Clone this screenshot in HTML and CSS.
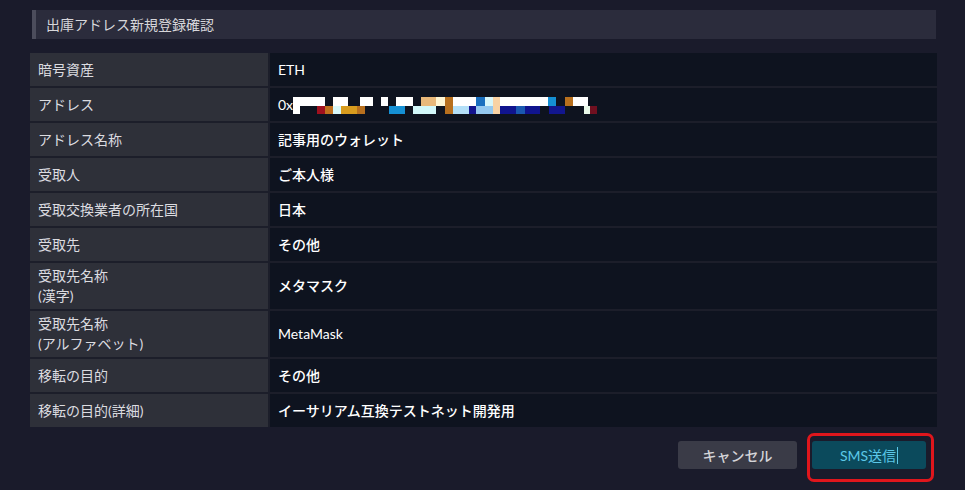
FILE: index.html
```html
<!DOCTYPE html>
<html lang="ja">
<head>
<meta charset="utf-8">
<title>出庫アドレス新規登録確認</title>
<link rel="stylesheet" href="styles.css">
</head>
<body>
<div class="page">
  <div class="title-bar">出庫アドレス新規登録確認</div>
  <div class="info-table">
    <div class="label">暗号資産</div>
    <div class="value">ETH</div>

    <div class="label">アドレス</div>
    <div class="value"><span>0x</span><svg class="mosaic" width="305" height="17" viewBox="0 0 305 17">
      <g>
        <rect x="0" y="0" width="32" height="9" fill="#ffffff"/>
        <rect x="40" y="0" width="15" height="9" fill="#ffffff"/>
        <rect x="67" y="0" width="13" height="9" fill="#ffffff"/>
        <rect x="88" y="0" width="7" height="9" fill="#ffffff"/>
        <rect x="103" y="0" width="17" height="9" fill="#ffffff"/>
        <rect x="128" y="0" width="15" height="9" fill="#e8b87a"/>
        <rect x="143" y="0" width="9" height="9" fill="#fff6d4"/>
        <rect x="152" y="0" width="8" height="17" fill="#b8701e"/>
        <rect x="160" y="0" width="23" height="9" fill="#ffffff"/>
        <rect x="183" y="0" width="9" height="9" fill="#1a6fbf"/>
        <rect x="192" y="0" width="8" height="9" fill="#d8f6fa"/>
        <rect x="200" y="0" width="7" height="17" fill="#f9d2a4"/>
        <rect x="207" y="0" width="48" height="9" fill="#ffffff"/>
        <rect x="255" y="0" width="8" height="9" fill="#1590d4"/>
        <rect x="272" y="0" width="8" height="9" fill="#b8701e"/>
        <rect x="280" y="0" width="15" height="9" fill="#ffffff"/>
      </g>
      <g>
        <rect x="0" y="9" width="7" height="8" fill="#ffffff"/>
        <rect x="24" y="9" width="8" height="8" fill="#a0101e"/>
        <rect x="32" y="9" width="8" height="8" fill="#c0701e"/>
        <rect x="40" y="9" width="8" height="8" fill="#d8f8fa"/>
        <rect x="48" y="9" width="16" height="8" fill="#d89c1e"/>
        <rect x="64" y="9" width="8" height="8" fill="#b8701e"/>
        <rect x="96" y="9" width="16" height="8" fill="#1590d4"/>
        <rect x="120" y="9" width="23" height="8" fill="#d2f8fa"/>
        <rect x="160" y="9" width="16" height="8" fill="#b4e0f8"/>
        <rect x="176" y="9" width="7" height="8" fill="#14148e"/>
        <rect x="183" y="9" width="17" height="8" fill="#94c8f0"/>
        <rect x="207" y="9" width="16" height="8" fill="#10148e"/>
        <rect x="223" y="9" width="9" height="8" fill="#1a58b0"/>
        <rect x="232" y="9" width="15" height="8" fill="#10148e"/>
        <rect x="256" y="9" width="16" height="8" fill="#12168e"/>
        <rect x="291" y="9" width="6" height="8" fill="#e8f8e8"/>
        <rect x="297" y="9" width="7" height="8" fill="#701020"/>
      </g>
    </svg></div>

    <div class="label">アドレス名称</div>
    <div class="value jp">記事用のウォレット</div>

    <div class="label">受取人</div>
    <div class="value jp">ご本人様</div>

    <div class="label">受取交換業者の所在国</div>
    <div class="value jp">日本</div>

    <div class="label">受取先</div>
    <div class="value jp">その他</div>

    <div class="label">受取先名称<br>(漢字)</div>
    <div class="value jp">メタマスク</div>

    <div class="label">受取先名称<br>(アルファベット)</div>
    <div class="value">MetaMask</div>

    <div class="label">移転の目的</div>
    <div class="value jp">その他</div>

    <div class="label">移転の目的(詳細)</div>
    <div class="value jp">イーサリアム互換テストネット開発用</div>
  </div>

  <div class="actions">
    <button class="btn btn-cancel" type="button">キャンセル</button>
    <div class="highlight">
      <button class="btn btn-sms" type="button">SMS送信<span class="caret"></span></button>
    </div>
  </div>
</div>
</body>
</html>
```

FILE: styles.css
```css
* { box-sizing: border-box; }

html, body {
  margin: 0;
  padding: 0;
  background: #1a1b2b;
}

body {
  font-family: Lato, "Noto Sans CJK JP", sans-serif;
  font-size: 14px;
  color: #ffffff;
}

.page {
  width: 965px;
  padding: 10px 28px 0 30px;
}

.title-bar {
  margin: 0 1px 14px 2px;
  height: 29px;
  background: #2b2c3c;
  border-left: 4px solid #4c4d5c;
  padding-left: 10px;
  line-height: 29px;
  color: #d6d6da;
  font-size: 14px;
}

.info-table {
  display: grid;
  grid-template-columns: 238px 667px;
  column-gap: 2px;
  row-gap: 2px;
  background: #1c1e2a;
}

.label,
.value {
  min-height: 33px;
  padding: 3px 8px;
  line-height: 20px;
  display: flex;
  align-items: center;
}

.label {
  background: #2e3039;
  color: #dcdce0;
}

.value {
  background: #0e131f;
  color: #ffffff;
}

.value.jp {
  font-weight: 500;
}

.mosaic {
  display: block;
  margin-top: 2px;
}

.actions {
  display: flex;
  justify-content: flex-end;
  align-items: flex-start;
  margin-top: 6px;
  padding-right: 3px;
}

.btn {
  font-family: Lato, "Noto Sans CJK JP", sans-serif;
  font-size: 14px;
  height: 28px;
  border: none;
  border-radius: 3px;
  padding: 0;
  cursor: pointer;
}

.btn-cancel {
  width: 119px;
  margin-top: 8px;
  margin-right: 10px;
  background: #3a3b47;
  color: #d4d4d8;
  font-weight: 500;
}

.highlight {
  border: 3px solid #e0161c;
  border-radius: 7px;
  padding: 5px 5px 10px 2px;
}

.btn-sms {
  display: flex;
  align-items: center;
  justify-content: center;
  width: 114px;
  background: #0b4a5c;
  color: #5cc8e8;
}

.caret {
  display: inline-block;
  width: 1px;
  height: 17px;
  background: #5cc8e8;
  margin-left: 1px;
}
```
